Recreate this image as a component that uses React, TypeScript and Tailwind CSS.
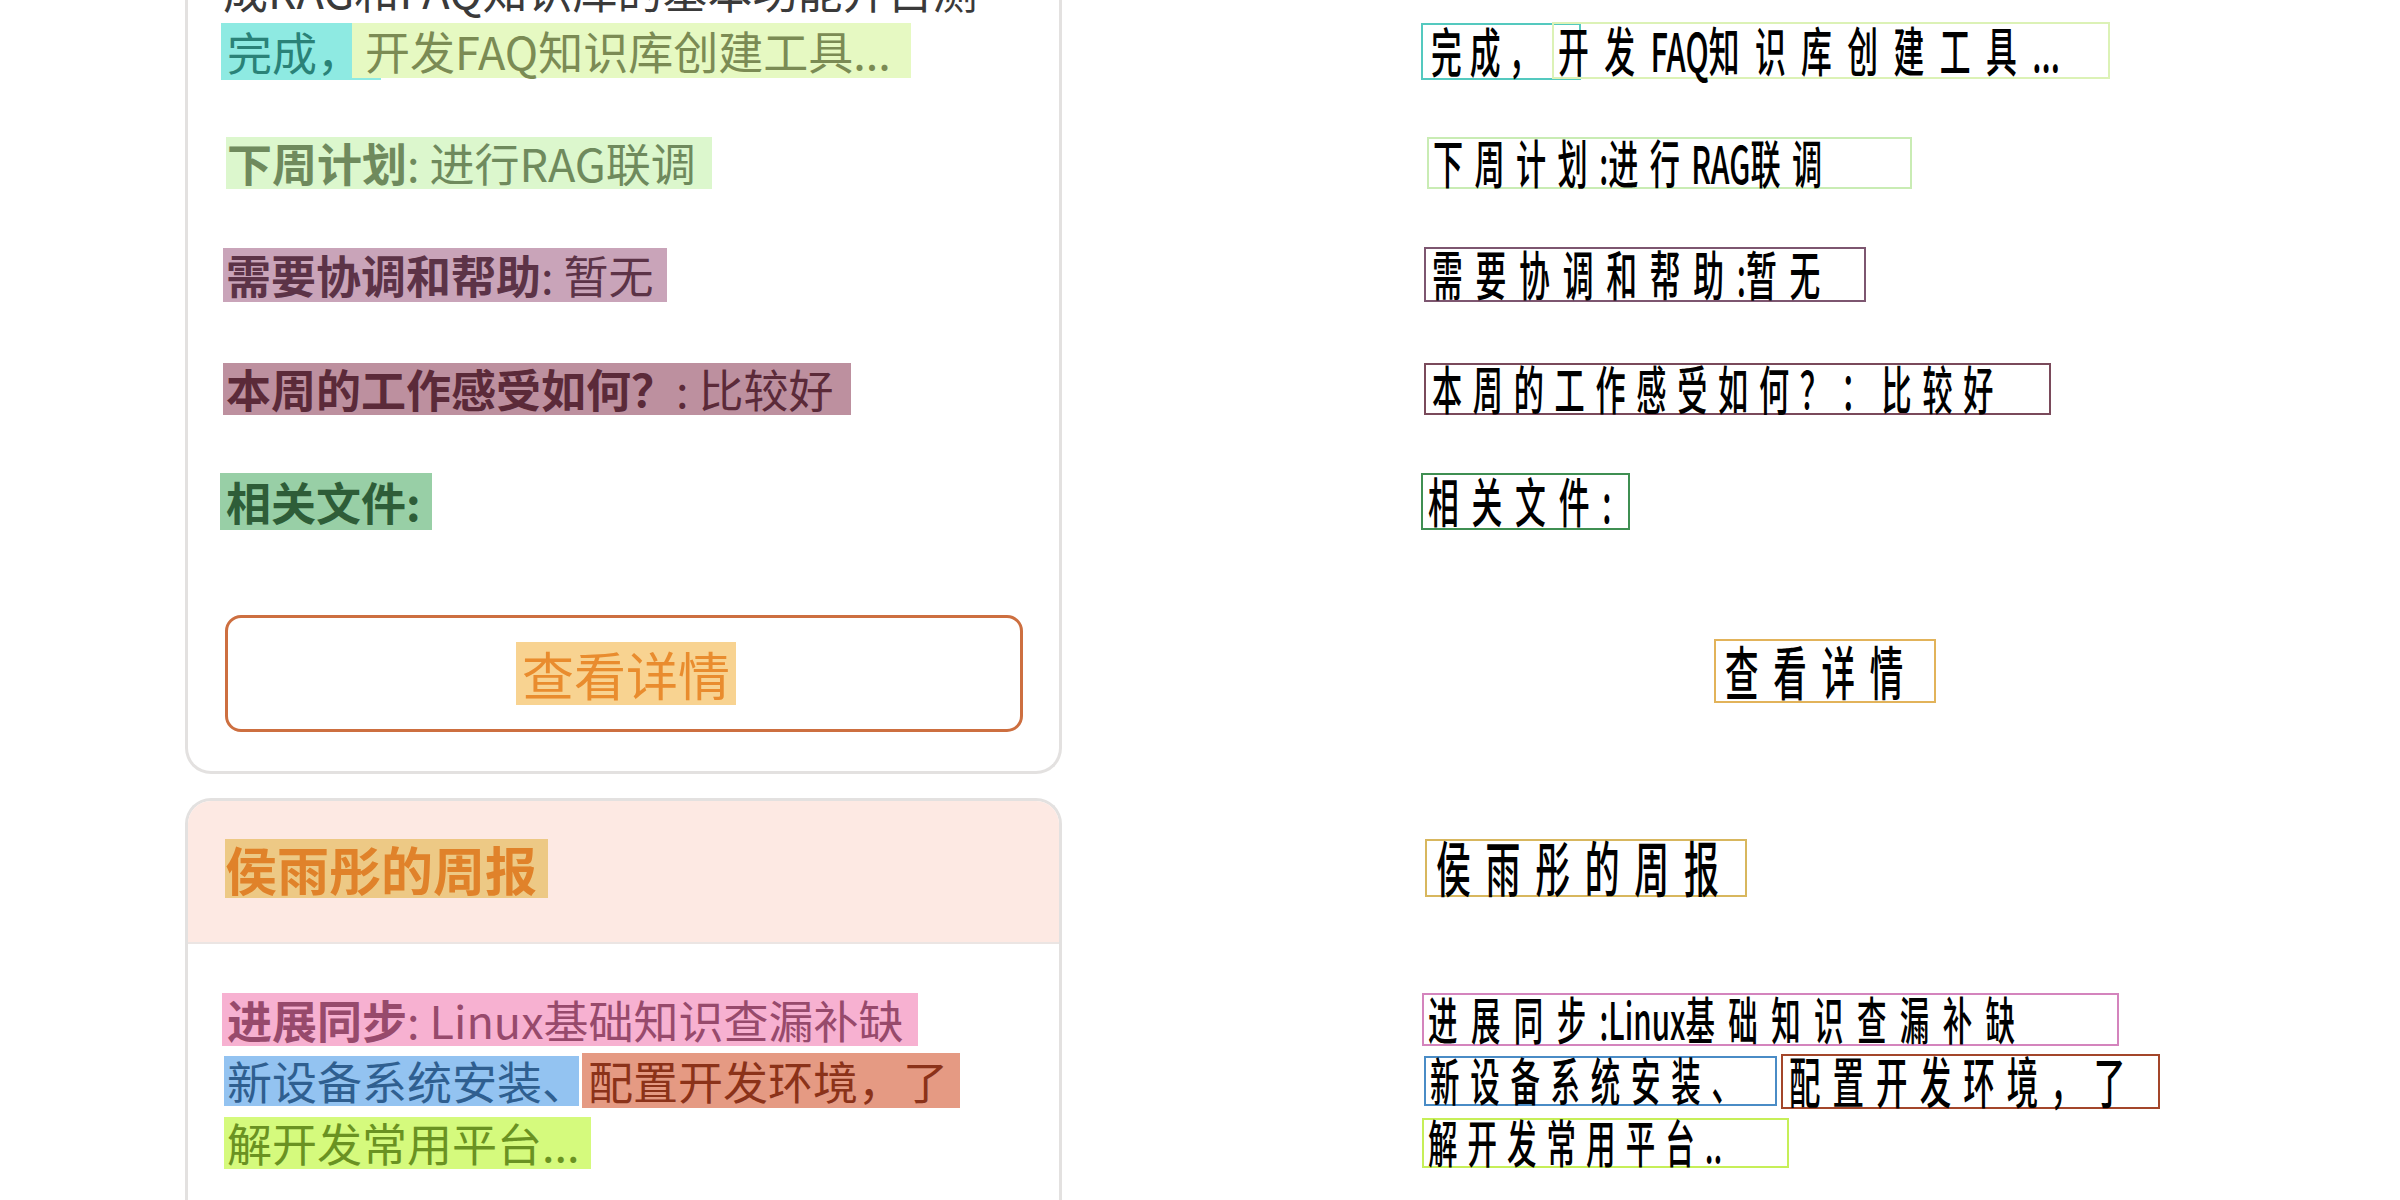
import React from 'react';

const FONT = "font-['Noto_Sans_CJK_SC','Noto_Sans',sans-serif]";

type OcrBox = { text: string; box: string; font: string };

// recognised text boxes, drawn over the blank right half
const OCR_BOXES: OcrBox[] = [
  { text: '完成，', box: 'left-[221px] top-[23px] w-[160px] h-[57px] border-[#54c9bf] pl-[8px]', font: 'text-[46px] tracking-[12px]' },
  { text: '开发FAQ知识库创建工具...', box: 'left-[352px] top-[22px] w-[558px] h-[57px] border-[#dcf2b6] pl-[4px]', font: 'text-[46px] tracking-[23px]' },
  { text: '下周计划:进行RAG联调', box: 'left-[227px] top-[137px] w-[485px] h-[52px] border-[#c9ecb4] pl-[4px]', font: 'text-[45px] tracking-[17px]' },
  { text: '需要协调和帮助:暂无', box: 'left-[224px] top-[247px] w-[442px] h-[55px] border-[#7d5670] pl-[6px]', font: 'text-[46px] tracking-[19px]' },
  { text: '本周的工作感受如何？：比较好', box: 'left-[224px] top-[363px] w-[627px] h-[52px] border-[#7a4a5b] pl-[6px]', font: 'text-[45px] tracking-[16px]' },
  { text: '相关文件:', box: 'left-[221px] top-[473px] w-[209px] h-[57px] border-[#3f8f52] pl-[5px]', font: 'text-[46px] tracking-[19px]' },
  { text: '查看详情', box: 'left-[514px] top-[639px] w-[222px] h-[64px] border-[#e2b35a] pl-[9px]', font: 'text-[50px] tracking-[22px]' },
  { text: '侯雨彤的周报', box: 'left-[225px] top-[839px] w-[322px] h-[58px] border-[#d8b75e] pl-[9px]', font: 'text-[52px] tracking-[22px]' },
  { text: '进展同步:Linux基础知识查漏补缺', box: 'left-[222px] top-[993px] w-[697px] h-[53px] border-[#d484bd] pl-[4px]', font: 'text-[44px] tracking-[20px]' },
  { text: '新设备系统安装、', box: 'left-[224px] top-[1056px] w-[353px] h-[50px] border-[#4a8cc6] pl-[4px]', font: 'text-[44px] tracking-[16px]' },
  { text: '配置开发环境，了', box: 'left-[581px] top-[1054px] w-[379px] h-[55px] border-[#a3462a] pl-[6px]', font: 'text-[47px] tracking-[18px]' },
  { text: '解开发常用平台..', box: 'left-[222px] top-[1118px] w-[367px] h-[50px] border-[#c6ef58] pl-[4px]', font: 'text-[44px] tracking-[15px]' },
];

// split into runs: wide (CJK / full-width) chars get tracking, ascii stays tight
const splitRuns = (s: string) => {
  const runs: { latin: boolean; s: string }[] = [];
  for (const ch of s) {
    const latin = ch.charCodeAt(0) < 0x2000;
    const last = runs[runs.length - 1];
    if (last && last.latin === latin) last.s += ch;
    else runs.push({ latin, s: ch });
  }
  return runs;
};

const OcrText: React.FC<{ b: OcrBox }> = ({ b }) => (
  <div className={`absolute flex items-center border-2 ${b.box}`}>
    <span className={`inline-block origin-left scale-x-[0.67] scale-y-[1.16] -translate-y-[2px] whitespace-nowrap leading-none font-medium text-black ${b.font}`}>
      {splitRuns(b.text).map((r, i) =>
        r.latin ? (
          <span key={i} className="inline-block leading-none tracking-normal">{r.s}</span>
        ) : (
          <span key={i} className="inline-block leading-none">{r.s}</span>
        )
      )}
    </span>
  </div>
);

const App: React.FC = () => {
  return (
    <div className={`flex w-[2400px] h-[1200px] overflow-hidden bg-white ${FONT}`}>
      {/* left: source screenshot with highlighted regions */}
      <div className="w-[1200px] shrink-0 flex flex-col text-[45px]">
        <div className="ml-[185px] w-[877px] flex flex-col border-x-[3px] border-b-[3px] border-[#e3e1e0] rounded-b-[26px]">
          <div className="-mt-[38px] ml-[35px] h-[55px] leading-[55px] text-[#3a3a3a] whitespace-nowrap">
            成RAG和FAQ知识库的基本功能并自测
          </div>

          <div className="mt-[6px] flex items-start whitespace-nowrap">
            <span className="ml-[33px] w-[160px] h-[57px] leading-[57px] pl-[6px] bg-[#8eeae2] text-[#2a8278]">完成，</span>
            <span className="-ml-[29px] w-[559px] h-[55px] leading-[55px] pl-[13px] bg-[#e6f9c2] text-[#7b8b54]">开发FAQ知识库创建工具...</span>
          </div>

          <div className="mt-[57px] ml-[38px] w-[486px] h-[52px] leading-[52px] pl-[1px] bg-[#dcf7cd] text-[#6f8a5d] whitespace-nowrap">
            <span className="font-bold">下周计划</span>: 进行RAG联调
          </div>

          <div className="mt-[59px] ml-[35px] w-[444px] h-[54px] leading-[54px] pl-[3px] bg-[#c9a4b9] text-[#5c3347] whitespace-nowrap">
            <span className="font-bold">需要协调和帮助</span>: 暂无
          </div>

          <div className="mt-[61px] ml-[35px] w-[628px] h-[52px] leading-[52px] pl-[3px] bg-[#bd909f] text-[#5b2a39] whitespace-nowrap">
            <span className="font-bold">本周的工作感受如何？</span>: 比较好
          </div>

          <div className="mt-[58px] ml-[32px] w-[212px] h-[57px] leading-[57px] pl-[6px] bg-[#98cfa6] text-[#2e5d38] font-bold whitespace-nowrap">
            相关文件:
          </div>

          <div className="mt-[85px] ml-[37px] w-[798px] h-[117px] flex items-center justify-center border-[3px] border-[#cd6f40] rounded-[16px]">
            <span className="ml-[4px] w-[220px] h-[63px] leading-[63px] text-center text-[52px] bg-[#f8d391] text-[#e98c2e] whitespace-nowrap">
              查看详情
            </span>
          </div>

          <div className="h-[39px]" />
        </div>

        <div className="mt-[24px] ml-[185px] w-[877px] h-[600px] shrink-0 flex flex-col border-x-[3px] border-t-[3px] border-[#e3e1e0] rounded-t-[26px] overflow-hidden">
          <div className="h-[143px] shrink-0 bg-[#fde9e3] border-b-2 border-[#ebe5e3] pt-[38px]">
            <div className="ml-[37px] w-[323px] h-[59px] leading-[59px] text-[52px] font-bold bg-[#edc985] text-[#e0822a] whitespace-nowrap">
              侯雨彤的周报
            </div>
          </div>

          <div className="mt-[49px] ml-[34px] w-[696px] h-[53px] leading-[53px] pl-[5px] bg-[#f7b1d1] text-[#974a6c] whitespace-nowrap">
            <span className="font-bold">进展同步</span>: Linux基础知识查漏补缺
          </div>

          <div className="mt-[7px] flex items-start whitespace-nowrap">
            <span className="mt-[3px] ml-[36px] w-[355px] h-[50px] leading-[50px] pl-[3px] bg-[#93c3f1] text-[#2f5f90]">新设备系统安装、</span>
            <span className="ml-[3px] w-[378px] h-[55px] leading-[55px] pl-[6px] bg-[#e59a83] text-[#8b3219]">配置开发环境，了</span>
          </div>

          <div className="mt-[9px] ml-[36px] w-[367px] h-[52px] leading-[52px] pl-[3px] bg-[#d5fa7d] text-[#6a9222] whitespace-nowrap">
            解开发常用平台...
          </div>
        </div>
      </div>

      {/* right: reconstructed text boxes */}
      <div className="relative w-[1200px] h-[1200px] shrink-0">
        {OCR_BOXES.map((b, i) => (
          <OcrText key={i} b={b} />
        ))}
      </div>
    </div>
  );
};

export default App;
